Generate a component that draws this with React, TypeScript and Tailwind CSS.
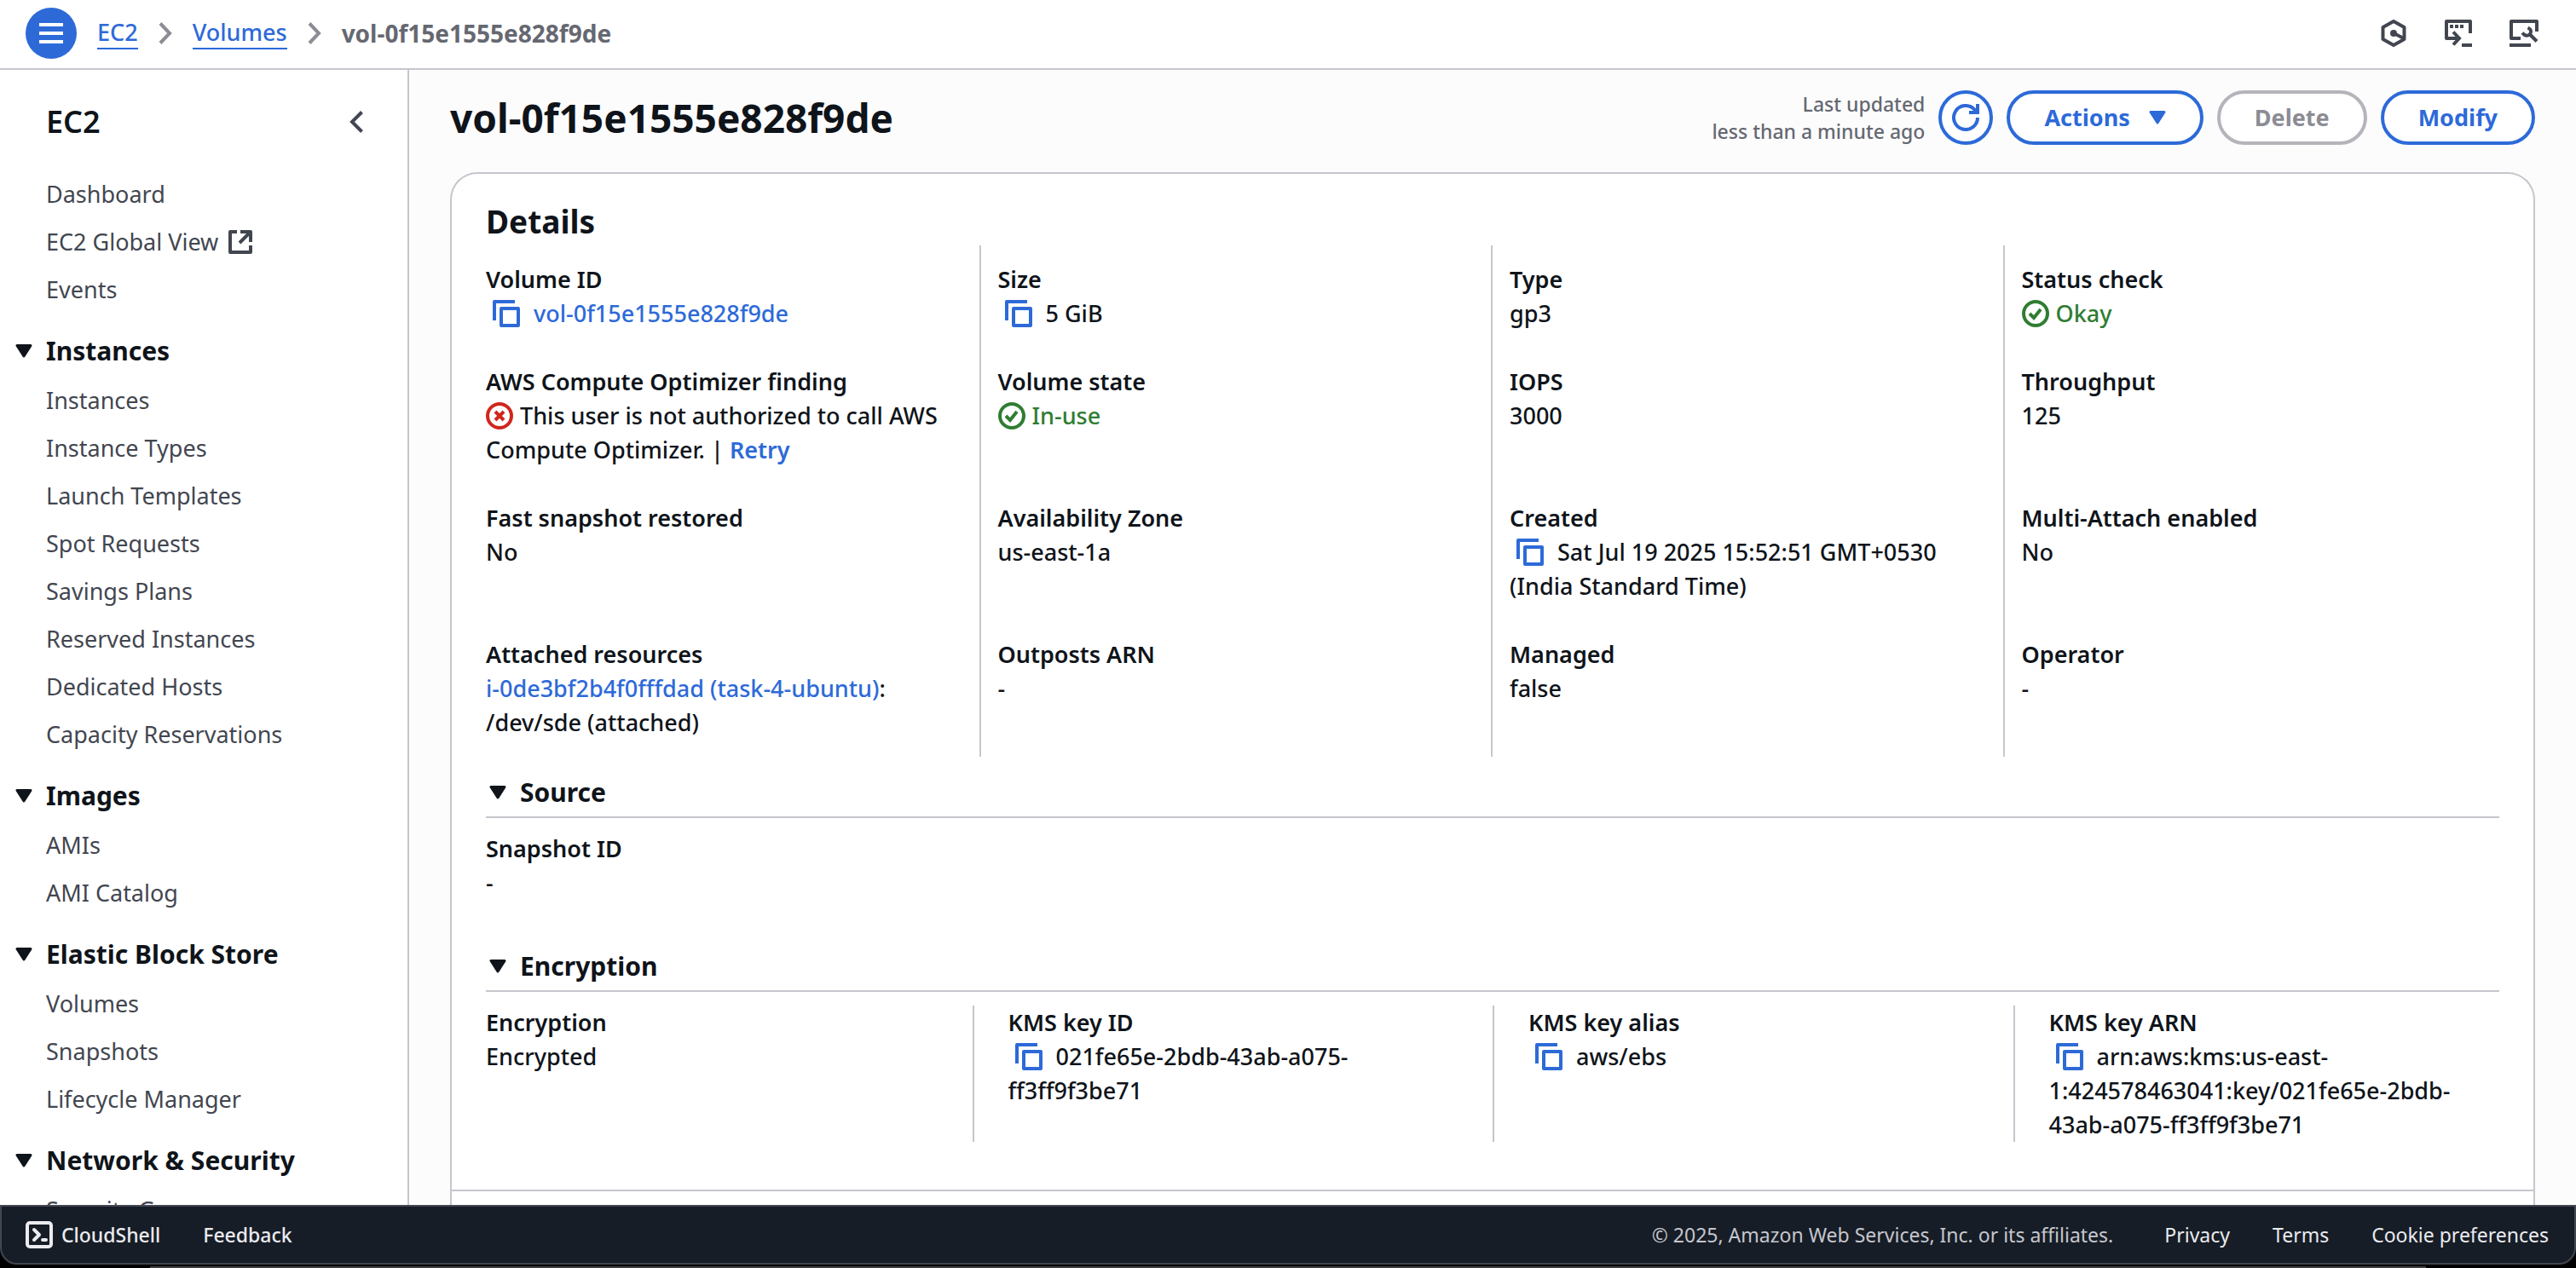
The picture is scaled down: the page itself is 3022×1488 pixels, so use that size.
import React from "react";

type Children = { children: React.ReactNode };

function Caret({ className = "" }: { className?: string }) {
  return (
    <svg viewBox="0 0 20 16" className={`h-4 w-5 shrink-0 ${className}`} aria-hidden="true">
      <path d="M2 1.5h16L10 14z" fill="currentColor" stroke="currentColor" strokeWidth="3" strokeLinejoin="round" />
    </svg>
  );
}

function CopyButton({ label }: { label: string }) {
  return (
    <button type="button" aria-label={`Copy ${label}`} className="mr-4 ml-2 inline-block align-[-6px] text-[#2d6ad8]">
      <svg viewBox="0 0 32 32" className="block size-8" fill="none" stroke="currentColor" strokeWidth="4" strokeLinejoin="round">
        <path d="M2 24V2h24" />
        <path d="M10 10h20v20H10z" />
      </svg>
    </button>
  );
}

function StatusOk({ children }: Children) {
  return (
    <span className="text-[#2f7d32]">
      <svg viewBox="0 0 32 32" className="mr-2 inline-block size-8 align-[-6px]" fill="none" stroke="currentColor" strokeWidth="4" aria-hidden="true">
        <circle cx="16" cy="16" r="14" />
        <path d="M9 16l5 5 8-10" />
      </svg>
      {children}
    </span>
  );
}

function ErrorIcon() {
  return (
    <svg viewBox="0 0 32 32" className="mr-2 inline-block size-8 align-[-6px] text-[#d0271d]" fill="none" stroke="currentColor" strokeWidth="4" aria-hidden="true">
      <circle cx="16" cy="16" r="14" />
      <path d="M11 11l10 10M21 11L11 21" />
    </svg>
  );
}

function ExternalIcon() {
  return (
    <svg viewBox="0 0 28 28" className="size-7" fill="none" stroke="currentColor" strokeWidth="4" strokeLinejoin="round" aria-label="Opens in a new tab">
      <path d="M10 2H2v24h24v-8" />
      <path d="M14 2h12v12M25 3L13 15" />
    </svg>
  );
}

function Chevron() {
  return (
    <svg viewBox="0 0 16 26" className="h-[26px] w-4 text-[#8c8c94]" fill="none" stroke="currentColor" strokeWidth="4" aria-hidden="true">
      <path d="M2 1.500l11 11.500-11 11.500" />
    </svg>
  );
}

function TopBar() {
  return (
    <header className="flex h-[82px] shrink-0 items-center border-b-2 border-[#c6c6cd] bg-white pr-11 pb-0.5 pl-[30px]">
      <button type="button" aria-label="Open navigation" className="grid size-[60px] place-items-center rounded-full bg-[#2d6ad8] text-white">
        <svg viewBox="0 0 28 24" className="h-6 w-7" fill="currentColor">
          <path d="M0 0h28v4H0zM0 10h28v4H0zM0 20h28v4H0z" />
        </svg>
      </button>
      <nav aria-label="Breadcrumb" className="ml-6 flex items-center gap-6 leading-9">
        <a href="#ec2" className="border-b-2 border-[#2d6ad8] text-[#2d6ad8]">EC2</a>
        <Chevron />
        <a href="#volumes" className="border-b-2 border-[#2d6ad8] text-[#2d6ad8]">Volumes</a>
        <Chevron />
        <span className="text-[28px] font-bold text-[#656871]">vol-0f15e1555e828f9de</span>
      </nav>
      <div className="ml-auto flex items-center gap-11 text-[#424650]">
        <button type="button" aria-label="Settings">
          <svg viewBox="0 0 32 32" className="size-8" fill="none" stroke="currentColor" strokeWidth="4" strokeLinejoin="round">
            <path d="M16 2l12.500 7v14L16 30 3.500 23V9z" />
            <circle cx="16" cy="16" r="4" fill="currentColor" stroke="none" />
            <path d="M16 16l12 6" />
          </svg>
        </button>
        <button type="button" aria-label="Shell panel">
          <svg viewBox="0 0 32 32" className="size-8" fill="none" stroke="currentColor" strokeWidth="4">
            <path d="M30 16V2H2v20h15" strokeLinejoin="round" />
            <path d="M10 14.500l7 7.500-7 7.500" />
            <path d="M20 30h12" />
            <path d="M6 8h4M12 8h4M18 8h4" />
          </svg>
        </button>
        <button type="button" aria-label="Diagnostics">
          <svg viewBox="0 0 34 32" className="h-8 w-[34px]" fill="none" stroke="currentColor" strokeWidth="4">
            <path d="M32 14V2H2v20h11" strokeLinejoin="round" />
            <path d="M0 30h25" />
            <path d="M24 17.500l8 8" />
            <path d="M21.500 9.500c4 2 4.500 5 2.500 7.500s-6 2.500-9-1.500" />
          </svg>
        </button>
      </div>
    </header>
  );
}

const topLinks = ["Dashboard", "EC2 Global View", "Events"];
const sections = [
  {
    title: "Instances",
    items: ["Instances", "Instance Types", "Launch Templates", "Spot Requests", "Savings Plans", "Reserved Instances", "Dedicated Hosts", "Capacity Reservations"],
  },
  { title: "Images", items: ["AMIs", "AMI Catalog"] },
  { title: "Elastic Block Store", items: ["Volumes", "Snapshots", "Lifecycle Manager"] },
  { title: "Network & Security", items: ["Security Groups"] },
];

function NavItem({ label }: { label: string }) {
  return (
    <li>
      <a href="#nav" className="flex h-14 items-center gap-3 pl-[54px]">
        {label}
        {label === "EC2 Global View" && <ExternalIcon />}
      </a>
    </li>
  );
}

function Sidebar() {
  return (
    <aside className="w-[480px] shrink-0 overflow-hidden border-r-2 border-[#c6c6cd] bg-white font-normal text-[#424650]">
      <div className="flex h-[118px] items-center justify-between pt-1 pr-[52px] pl-[54px]">
        <h2 className="text-[36px] font-semibold text-[#0f141a]">EC2</h2>
        <button type="button" aria-label="Close navigation">
          <svg viewBox="0 0 16 26" className="h-[26px] w-4" fill="none" stroke="currentColor" strokeWidth="4">
            <path d="M14.500 1.500L3 13l11.500 11.500" />
          </svg>
        </button>
      </div>
      <ul>
        {topLinks.map((l) => (
          <NavItem key={l} label={l} />
        ))}
      </ul>
      {sections.map((s) => (
        <section key={s.title}>
          <button type="button" className="flex h-[74px] items-center gap-4 pt-3.5 pl-[18px] text-[30px] font-bold text-[#0f141a]">
            <Caret />
            {s.title}
          </button>
          <ul>
            {s.items.map((l) => (
              <NavItem key={l} label={l} />
            ))}
          </ul>
        </section>
      ))}
    </aside>
  );
}

function Field({ label, children }: { label: string } & Children) {
  return (
    <div>
      <dt className="font-semibold">{label}</dt>
      <dd>{children}</dd>
    </div>
  );
}

function DetailField({ label, children }: { label: string } & Children) {
  return (
    <div className="border-r-2 border-[#c6c6cd] pr-[18px] pb-10 pl-5 nth-[4n]:border-transparent nth-[n+17]:pb-5">
      <Field label={label}>{children}</Field>
    </div>
  );
}

function SectionTitle({ children }: Children) {
  return (
    <h3 className="border-b-2 border-[#c6c6cd] pb-2">
      <button type="button" className="flex items-center gap-4 pl-1 text-[30px] leading-10 font-bold">
        <Caret />
        {children}
      </button>
    </h3>
  );
}

function KeyField({ label, children }: { label: string } & Children) {
  return (
    <div className="-ml-10 border-l-2 border-[#c6c6cd] pl-10 first:border-transparent first:pl-[38px]">
      <Field label={label}>{children}</Field>
    </div>
  );
}

function Details() {
  return (
    <section className="rounded-t-[32px] border-2 border-b-0 border-[#c6c6cd] bg-white">
      <div className="border-b-2 border-[#c6c6cd] px-10 pt-7 pb-14">
        <h2 className="text-[37px] leading-[56px] font-bold">Details</h2>
        <dl className="-mx-5 grid grid-cols-4">
          {["a", "b", "c", "d"].map((k) => (
            <div key={k} aria-hidden="true" className="h-5 border-r-2 border-[#c6c6cd] nth-[4n]:border-transparent" />
          ))}
          <DetailField label="Volume ID">
            <CopyButton label="volume ID" />
            <a href="#volume" className="text-[#2d6ad8]">vol-0f15e1555e828f9de</a>
          </DetailField>
          <DetailField label="Size">
            <CopyButton label="size" />5 GiB
          </DetailField>
          <DetailField label="Type">gp3</DetailField>
          <DetailField label="Status check">
            <StatusOk>Okay</StatusOk>
          </DetailField>
          <DetailField label="AWS Compute Optimizer finding">
            <ErrorIcon />
            This user is not authorized to call AWS Compute Optimizer. |{" "}
            <button type="button" className="font-semibold text-[#2d6ad8]">Retry</button>
          </DetailField>
          <DetailField label="Volume state">
            <StatusOk>In-use</StatusOk>
          </DetailField>
          <DetailField label="IOPS">3000</DetailField>
          <DetailField label="Throughput">125</DetailField>
          <DetailField label="Fast snapshot restored">No</DetailField>
          <DetailField label="Availability Zone">us-east-1a</DetailField>
          <DetailField label="Created">
            <CopyButton label="creation time" />
            Sat Jul 19 2025 15:52:51 GMT+0530 (India Standard Time)
          </DetailField>
          <DetailField label="Multi-Attach enabled">No</DetailField>
          <DetailField label="Attached resources">
            <a href="#instance" className="text-[#2d6ad8]">i-0de3bf2b4f0fffdad (task-4-ubuntu)</a>:
            <br />
            /dev/sde (attached)
          </DetailField>
          <DetailField label="Outposts ARN">-</DetailField>
          <DetailField label="Managed">false</DetailField>
          <DetailField label="Operator">-</DetailField>
        </dl>
        <div className="mt-[22px]">
          <SectionTitle>Source</SectionTitle>
          <dl className="mt-4">
            <Field label="Snapshot ID">-</Field>
          </dl>
        </div>
        <div className="mt-[58px]">
          <SectionTitle>Encryption</SectionTitle>
          <dl className="mt-4 grid grid-cols-4 gap-x-20">
            <KeyField label="Encryption">Encrypted</KeyField>
            <KeyField label="KMS key ID">
              <CopyButton label="KMS key ID" />
              021fe65e-2bdb-43ab-a075-
              <wbr />
              ff3ff9f3be71
            </KeyField>
            <KeyField label="KMS key alias">
              <CopyButton label="KMS key alias" />
              aws/ebs
            </KeyField>
            <KeyField label="KMS key ARN">
              <CopyButton label="KMS key ARN" />
              arn:aws:kms:us-east-
              <br />
              1:424578463041:key/021fe65e-2bdb-
              <br />
              43ab-a075-ff3ff9f3be71
            </KeyField>
          </dl>
        </div>
      </div>
      <div className="h-64" />
    </section>
  );
}

function PageHeader() {
  return (
    <div className="flex h-[120px] items-center gap-4 pb-2">
      <h1 className="mr-auto text-[46px] font-bold">vol-0f15e1555e828f9de</h1>
      <p className="text-right text-[23px] leading-8 text-[#656871]">
        Last updated
        <br />
        less than a minute ago
      </p>
      <button type="button" aria-label="Refresh" className="grid size-16 place-items-center rounded-full border-4 border-[#2d6ad8] bg-white text-[#2d6ad8]">
        <svg viewBox="0 0 32 32" className="size-8" fill="none" stroke="currentColor" strokeWidth="4">
          <path d="M30 16a14 14 0 1 1-4-9.800L29 10" />
          <path d="M30 0v10H20" />
        </svg>
      </button>
      <button type="button" className="flex h-16 items-center gap-[22px] rounded-full border-4 border-[#2d6ad8] bg-white px-10 font-bold text-[#2d6ad8]">
        Actions
        <Caret />
      </button>
      <button type="button" disabled className="h-16 rounded-full border-4 border-[#b4b4bb] bg-white px-10 font-bold text-[#8c8c94]">
        Delete
      </button>
      <button type="button" className="h-16 rounded-full border-4 border-[#2d6ad8] bg-white px-10 font-bold text-[#2d6ad8]">
        Modify
      </button>
    </div>
  );
}

function Footer() {
  return (
    <footer className="shrink-0 bg-black">
      <div className="flex h-[70px] items-center rounded-b-[20px] border-2 border-[#424650] bg-[#161d26] pr-[30px] pl-7 text-[23px] text-[#ebebf0]">
        <button type="button" className="flex items-center gap-2.5">
          <svg viewBox="0 0 32 32" className="size-8" fill="none" stroke="currentColor" strokeWidth="4" strokeLinejoin="round" strokeLinecap="round">
            <rect x="2" y="2" width="28" height="28" rx="3" />
            <path d="M10 10l6 6-6 6M20 22h4" />
          </svg>
          CloudShell
        </button>
        <a href="#feedback" className="ml-[50px]">Feedback</a>
        <div className="ml-auto flex items-center font-normal">
          <p className="text-[#c6c6cd]">© 2025, Amazon Web Services, Inc. or its affiliates.</p>
          <a href="#privacy" className="ml-[60px]">Privacy</a>
          <a href="#terms" className="ml-[50px]">Terms</a>
          <button type="button" className="ml-[50px]">Cookie preferences</button>
        </div>
      </div>
      <div className="mx-44 mt-0.5 h-0.5 bg-[#424242]" />
    </footer>
  );
}

export default function App() {
  return (
    <div className="flex h-screen flex-col overflow-hidden bg-[#fcfcfd] font-['Noto_Sans',sans-serif] text-[27px] leading-10 font-medium text-[#0f141a]">
      <TopBar />
      <div className="flex min-h-0 flex-1">
        <Sidebar />
        <main className="min-w-0 flex-1 overflow-hidden px-12">
          <PageHeader />
          <Details />
        </main>
      </div>
      <Footer />
    </div>
  );
}
